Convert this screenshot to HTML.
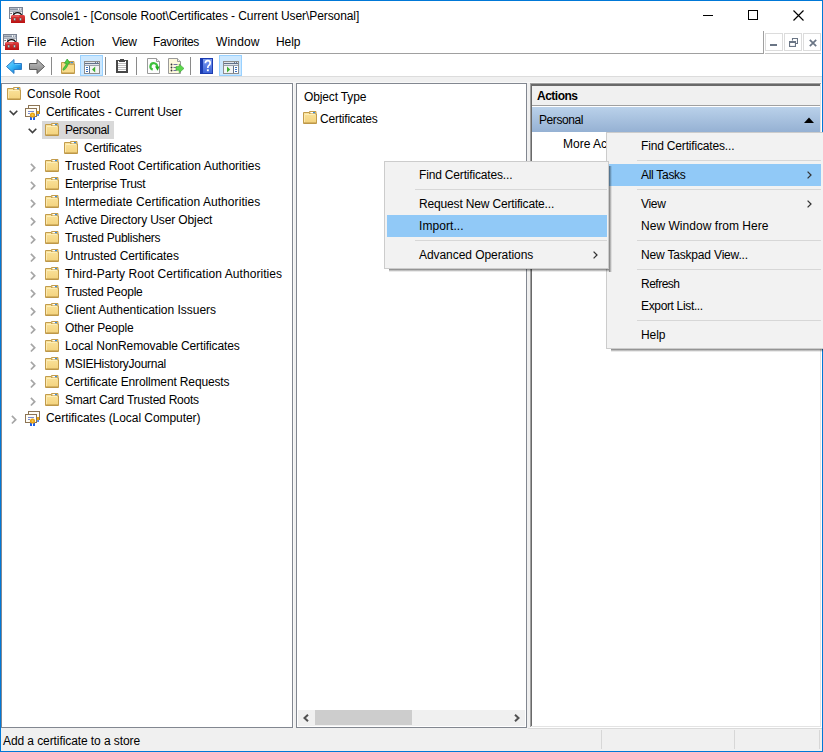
<!DOCTYPE html>
<html><head><meta charset="utf-8"><style>
html,body{margin:0;padding:0;}
body{width:823px;height:752px;position:relative;overflow:hidden;background:#fff;font-family:"Liberation Sans",sans-serif;font-size:12px;color:#000;}
.abs{position:absolute;}
.abs svg{display:block;}
.t{white-space:nowrap;line-height:18px;height:18px;}
</style></head><body>
<svg width="0" height="0" style="position:absolute"><defs><linearGradient id="fgrad" x1="0" y1="0" x2="0" y2="1"><stop offset="0" stop-color="#fae39c"/><stop offset="1" stop-color="#f3d27c"/></linearGradient></defs></svg>
<!-- window border -->
<div class="abs" style="left:0;top:0;width:821px;height:750px;border:1px solid #0078d7"></div>
<!-- title bar -->
<div class="abs" style="left:9px;top:7px;width:16px;height:16px">
<svg width="16" height="16" viewBox="0 0 16 16"><defs><linearGradient id="tbx" x1="0" y1="0" x2="0" y2="1"><stop offset="0" stop-color="#e04040"/><stop offset="1" stop-color="#b81010"/></linearGradient></defs><rect x="0.5" y="0.5" width="13" height="11" fill="#f4f6f8" stroke="#7b8494"/><rect x="1" y="1.5" width="8" height="1.3" fill="#6f7c90"/><rect x="10" y="1.5" width="1.2" height="1.2" fill="#6f7c90"/><rect x="11.8" y="1.5" width="1.2" height="1.2" fill="#6f7c90"/><rect x="1" y="3.5" width="12" height="1.2" fill="#8a93a3"/><rect x="4" y="5" width="1" height="6" fill="#7b8494"/><rect x="1.5" y="6" width="1.2" height="1" fill="#333"/><path d="M4.3 8.6 Q5 5.6 8.5 5.6 Q12 5.6 12.7 8.6" fill="none" stroke="#111" stroke-width="1.2"/><path d="M2 9.5 Q2 8 3.5 8 H14.5 Q16 8 16 9.5 V16 H2z" fill="url(#tbx)"/><rect x="3" y="8.6" width="7" height="1" fill="#f08080" opacity="0.7"/><rect x="4.8" y="11" width="1.8" height="2.6" rx="0.6" fill="#cfe4e4" stroke="#333" stroke-width="0.4"/><rect x="10.6" y="11" width="1.8" height="2.6" rx="0.6" fill="#cfe4e4" stroke="#333" stroke-width="0.4"/></svg></div>
<div class="abs t" style="left:30px;top:7px;letter-spacing:-0.08px">Console1 - [Console Root\Certificates - Current User\Personal]</div>
<div class="abs" style="left:703px;top:15px;width:10px;height:1px;background:#000"></div>
<div class="abs" style="left:748px;top:10px;width:8px;height:8px;border:1px solid #000"></div>
<div class="abs" style="left:793px;top:10px;width:11px;height:11px"><svg width="11" height="11" viewBox="0 0 11 11"><path d="M0.5 0.5 L10.5 10.5 M10.5 0.5 L0.5 10.5" stroke="#000" stroke-width="1.15"/></svg></div>
<!-- menu bar -->
<div class="abs" style="left:3px;top:34px;width:16px;height:16px">
<svg width="16" height="16" viewBox="0 0 16 16"><defs><linearGradient id="tbx2" x1="0" y1="0" x2="0" y2="1"><stop offset="0" stop-color="#e04040"/><stop offset="1" stop-color="#b81010"/></linearGradient></defs><rect x="0.5" y="0.5" width="13" height="11" fill="#f4f6f8" stroke="#7b8494"/><rect x="1" y="1.5" width="8" height="1.3" fill="#6f7c90"/><rect x="10" y="1.5" width="1.2" height="1.2" fill="#6f7c90"/><rect x="11.8" y="1.5" width="1.2" height="1.2" fill="#6f7c90"/><rect x="1" y="3.5" width="12" height="1.2" fill="#8a93a3"/><rect x="4" y="5" width="1" height="6" fill="#7b8494"/><rect x="1.5" y="6" width="1.2" height="1" fill="#333"/><path d="M4.3 8.6 Q5 5.6 8.5 5.6 Q12 5.6 12.7 8.6" fill="none" stroke="#111" stroke-width="1.2"/><path d="M2 9.5 Q2 8 3.5 8 H14.5 Q16 8 16 9.5 V16 H2z" fill="url(#tbx2)"/><rect x="3" y="8.6" width="7" height="1" fill="#f08080" opacity="0.7"/><rect x="4.8" y="11" width="1.8" height="2.6" rx="0.6" fill="#cfe4e4" stroke="#333" stroke-width="0.4"/><rect x="10.6" y="11" width="1.8" height="2.6" rx="0.6" fill="#cfe4e4" stroke="#333" stroke-width="0.4"/></svg></div>
<div class="abs t" style="left:27px;top:33px">File</div>
<div class="abs t" style="left:61px;top:33px">Action</div>
<div class="abs t" style="left:112px;top:33px;letter-spacing:-0.3px">View</div>
<div class="abs t" style="left:153px;top:33px;letter-spacing:-0.388px">Favorites</div>
<div class="abs t" style="left:216px;top:33px;letter-spacing:0.16px">Window</div>
<div class="abs t" style="left:276px;top:33px;letter-spacing:-0.1px">Help</div>
<div class="abs" style="left:1px;top:53px;width:763px;height:1px;background:#a0a0a0"></div>
<div class="abs" style="left:763px;top:31px;width:1px;height:22px;background:#a0a0a0"></div>
<div class="abs" style="left:765px;top:53px;width:56px;height:1px;background:#c8c8c8"></div>
<div class="abs" style="left:765px;top:33px;width:16px;height:16px;border:1px solid #dcdcdc"></div>
<div class="abs" style="left:784px;top:33px;width:16px;height:16px;border:1px solid #dcdcdc"></div>
<div class="abs" style="left:803px;top:33px;width:16px;height:16px;border:1px solid #dcdcdc"></div>
<div class="abs" style="left:770px;top:44px;width:7px;height:2px;background:#6a7585"></div>
<div class="abs" style="left:789px;top:38px;width:9px;height:9px"><svg width="9" height="9" viewBox="0 0 9 9"><path d="M3.5 2.5 V0.5 H8.5 V5.5 H6.5" fill="none" stroke="#6a7585" stroke-width="1.1"/><rect x="0.55" y="3.55" width="5.9" height="4.9" fill="none" stroke="#6a7585" stroke-width="1.1"/><rect x="0" y="3" width="7" height="2" fill="#6a7585"/></svg></div>
<div class="abs" style="left:809px;top:39px;width:8px;height:8px"><svg width="8" height="8" viewBox="0 0 8 8"><path d="M0.8 0.8 L7.2 7.2 M7.2 0.8 L0.8 7.2" stroke="#6a7585" stroke-width="1.7"/></svg></div>
<!-- toolbar -->
<div class="abs" style="left:1px;top:76px;width:821px;height:7px;background:#f0f0f0"></div>
<div class="abs" style="left:1px;top:76px;width:821px;height:1px;background:#dcdcdc"></div>
<div class="abs" style="left:1px;top:82px;width:821px;height:1px;background:#f8f8f8"></div>

<div class="abs" style="left:6px;top:59px;width:16px;height:15px"><svg width="16" height="15" viewBox="0 0 16 15"><defs><linearGradient id="gb" x1="0" y1="0" x2="1" y2="1"><stop offset="0" stop-color="#8ad8ff"/><stop offset="0.45" stop-color="#3ab8f8"/><stop offset="1" stop-color="#0068c8"/></linearGradient></defs><path d="M0.5 7.5 L8 0.5 V4.5 H15.5 V10.5 H8 V14.5 Z" fill="url(#gb)" stroke="#2f7dc6"/><path d="M9 5.5H14.5" stroke="#6cc8ff" stroke-width="0.8"/></svg></div>
<div class="abs" style="left:29px;top:59px;width:16px;height:15px"><svg width="16" height="15" viewBox="0 0 16 15"><defs><linearGradient id="gg" x1="0" y1="0" x2="0" y2="1"><stop offset="0" stop-color="#c4c4c4"/><stop offset="1" stop-color="#808080"/></linearGradient></defs><path d="M15.5 7.5 L8 0.5 V4.5 H0.5 V10.5 H8 V14.5 Z" fill="url(#gg)" stroke="#5a5a5a"/></svg></div>
<div class="abs" style="left:51px;top:57px;width:1px;height:18px;background:#8a8a8a"></div>
<div class="abs" style="left:60px;top:58px;width:16px;height:17px"><svg width="16" height="17" viewBox="0 0 16 17"><path d="M1.5 4.5h5.5l1 1.5h6.5v9.5h-13z" fill="#f8db8c" stroke="#c29c4c"/><path d="M7.5 3.5h6.5v2.5h-6z" fill="#f3d17a" stroke="#c29c4c"/><rect x="10.5" y="4" width="2.5" height="1.2" fill="#3b8de0"/><path d="M2 15h12" stroke="#b89244"/><path d="M2.8 11.5 C4 9 5.5 8 6.5 5.5 L4.5 5.2 L7.2 1 L10 5 L8.3 5.3 C7.6 8.5 6 10.5 4 12.3 Z" fill="#50d040" stroke="#2f9a2a" stroke-width="0.7"/></svg></div>
<div class="abs" style="left:80px;top:55px;width:21px;height:19px;border:1px solid #99d1ff;background:#cce8ff"></div>
<div class="abs" style="left:84px;top:61px;width:16px;height:13px"><svg width="16" height="13" viewBox="0 0 16 13" shape-rendering="crispEdges"><rect x="0" y="0" width="16" height="13" fill="#8c8c8c"/><rect x="1" y="1" width="14" height="11" fill="#fff"/><rect x="1" y="1" width="14" height="1" fill="#dfe3e8"/><rect x="11" y="1" width="1" height="1" fill="#6a7a90"/><rect x="13" y="1" width="1" height="1" fill="#6a7a90"/><rect x="1" y="2" width="14" height="1" fill="#61718a"/><rect x="1" y="3" width="14" height="1" fill="#dfe3e8"/><rect x="1" y="4" width="14" height="1" fill="#9aa2ae"/><rect x="5" y="5" width="1" height="7" fill="#61718a"/><rect x="6" y="5" width="9" height="7" fill="#f4f4f4"/><rect x="2" y="6" width="2" height="1" fill="#3a70c0"/><rect x="2" y="8" width="2" height="1" fill="#3a70c0"/><rect x="2" y="10" width="2" height="1" fill="#3a70c0"/><path d="M8 8.5 L11.2 5.5 V11.5 Z" fill="#3cb030" shape-rendering="auto"/></svg></div>
<div class="abs" style="left:105px;top:57px;width:1px;height:18px;background:#8a8a8a"></div>
<div class="abs" style="left:116px;top:59px;width:12px;height:14px"><svg width="12" height="14" viewBox="0 0 12 14" shape-rendering="crispEdges"><rect x="0" y="1" width="12" height="13" fill="#474747"/><rect x="2" y="2" width="8" height="10" fill="#fff"/><rect x="4" y="0" width="4" height="1" fill="#474747"/><rect x="3" y="2" width="6" height="1" fill="#474747"/><rect x="2" y="4" width="8" height="1" fill="#bdbdbd"/><rect x="2" y="6" width="8" height="1" fill="#bdbdbd"/><rect x="2" y="8" width="8" height="1" fill="#bdbdbd"/><rect x="2" y="10" width="8" height="1" fill="#bdbdbd"/></svg></div>
<div class="abs" style="left:136px;top:57px;width:1px;height:18px;background:#8a8a8a"></div>
<div class="abs" style="left:147px;top:58px;width:14px;height:16px"><svg width="14" height="16" viewBox="0 0 14 16"><path d="M0.5 0.5h9l3 3v12h-12z" fill="#fdfdfd" stroke="#9a9a9a"/><path d="M9.5 0.5v3h3" fill="#eee" stroke="#9a9a9a"/><path d="M5.7 11.6 A3.3 3.3 0 1 1 10 9" fill="none" stroke="#3cc03c" stroke-width="2.2"/><path d="M8 8.6 L12.6 8.4 L10.6 12.8 Z" fill="#1fae1f"/></svg></div>
<div class="abs" style="left:168px;top:58px;width:17px;height:16px"><svg width="17" height="16" viewBox="0 0 17 16"><path d="M0.5 0.5h9l3 3v12h-12z" fill="#fdf8dc" stroke="#9a9a9a"/><path d="M9.5 0.5v3h3" fill="#eee" stroke="#9a9a9a"/><circle cx="3.5" cy="6.5" r="0.9" fill="#333"/><circle cx="3.5" cy="9.5" r="0.9" fill="#333"/><circle cx="3.5" cy="12.5" r="0.9" fill="#333"/><path d="M5.5 6.5h4M5.5 9.5h3M5.5 12.5h3" stroke="#7474a0" stroke-width="1"/><path d="M8 8.6h3.2V6L16 10.4L11.2 14.8V12.2H8z" fill="#5cd84c" stroke="#3aa034" stroke-width="0.6"/></svg></div>
<div class="abs" style="left:190px;top:57px;width:1px;height:18px;background:#8a8a8a"></div>
<div class="abs" style="left:200px;top:58px;width:13px;height:16px"><svg width="13" height="16" viewBox="0 0 13 16"><defs><linearGradient id="hb" x1="0" y1="0" x2="0" y2="1"><stop offset="0" stop-color="#7a9af0"/><stop offset="1" stop-color="#3a62d8"/></linearGradient></defs><rect x="0" y="0" width="13" height="16" fill="#1c3cb0"/><rect x="3" y="1" width="9" height="14" fill="url(#hb)"/><path d="M5.3 5.2 Q5.5 2.6 7.8 2.6 Q10.2 2.6 10.2 4.9 Q10.2 6.6 8.6 7.6 Q7.8 8.2 7.8 10" fill="none" stroke="#fff" stroke-width="1.7"/><rect x="6.9" y="11.3" width="1.9" height="1.9" fill="#fff"/></svg></div>
<div class="abs" style="left:219px;top:55px;width:21px;height:19px;border:1px solid #99d1ff;background:#cce8ff"></div>
<div class="abs" style="left:223px;top:61px;width:16px;height:13px"><svg width="16" height="13" viewBox="0 0 16 13" shape-rendering="crispEdges"><rect x="0" y="0" width="16" height="13" fill="#8c8c8c"/><rect x="1" y="1" width="14" height="11" fill="#fff"/><rect x="1" y="1" width="14" height="1" fill="#dfe3e8"/><rect x="11" y="1" width="1" height="1" fill="#6a7a90"/><rect x="13" y="1" width="1" height="1" fill="#6a7a90"/><rect x="1" y="2" width="14" height="1" fill="#61718a"/><rect x="1" y="3" width="14" height="1" fill="#dfe3e8"/><rect x="1" y="4" width="14" height="1" fill="#9aa2ae"/><rect x="10" y="5" width="1" height="7" fill="#61718a"/><rect x="1" y="5" width="9" height="7" fill="#f4f4f4"/><rect x="12" y="6" width="2" height="1" fill="#3a70c0"/><rect x="12" y="8" width="2" height="1" fill="#3a70c0"/><rect x="12" y="10" width="2" height="1" fill="#3a70c0"/><path d="M4 5.5 L7.2 8.5 L4 11.5 Z" fill="#3cb030" shape-rendering="auto"/></svg></div>

<!-- panes -->
<div class="abs" style="left:1px;top:83px;width:290px;height:643px;border:1px solid #828790;background:#fff"></div>
<div class="abs" style="left:293px;top:83px;width:3px;height:645px;background:#f0f0f0"></div>
<div class="abs" style="left:293px;top:83px;width:1px;height:645px;background:#f8f8f8"></div>
<div class="abs" style="left:296px;top:83px;width:229px;height:643px;border:1px solid #828790;background:#fff"></div>
<div class="abs" style="left:527px;top:83px;width:3px;height:645px;background:#f0f0f0"></div>
<div class="abs" style="left:530px;top:83px;width:292px;height:645px;background:#fff"></div>
<div class="abs" style="left:530px;top:83px;width:291px;height:1px;background:#a0a0a0"></div>
<div class="abs" style="left:530px;top:83px;width:1px;height:644px;background:#a0a0a0"></div>
<div class="abs" style="left:531px;top:84px;width:290px;height:2px;background:#696969"></div>
<div class="abs" style="left:531px;top:84px;width:1px;height:643px;background:#696969"></div>
<div class="abs" style="left:531px;top:726px;width:290px;height:1px;background:#e3e3e3"></div>
<div class="abs" style="left:820px;top:84px;width:1px;height:643px;background:#e3e3e3"></div>
<div class="abs" style="left:6px;top:86px;width:16px;height:16px"><svg width="16" height="16" viewBox="0 0 16 16"><path d="M1.5 2.5h5.5l1 1.5h6.5v9.5h-13z" fill="url(#fgrad)" stroke="#c29c4c"/><path d="M7.5 1.5h6.5v2.5h-6z" fill="#f3d17a" stroke="#c29c4c"/><rect x="8.5" y="2" width="3" height="1.2" fill="#fff"/><rect x="11" y="2" width="2" height="1.2" fill="#3b8de0"/><path d="M2.5 4.5h11" stroke="#fdeeb9"/><path d="M2.5 5v7.5" stroke="#fcecb8" stroke-width="0.8"/><path d="M2 13h12" stroke="#b89244"/></svg></div>
<div class="abs t" style="left:27px;top:85px">Console Root</div>
<div class="abs" style="left:9px;top:110px;width:10px;height:6px"><svg width="10" height="6" viewBox="0 0 10 6"><path d="M0.7 0.7 L4.5 4.5 L8.3 0.7" fill="none" stroke="#404040" stroke-width="1.6"/></svg></div>
<div class="abs" style="left:25px;top:104px;width:16px;height:16px"><svg width="16" height="16" viewBox="0 0 16 16"><rect x="3.5" y="1.5" width="11" height="8" fill="#fffdf6" stroke="#8c7454"/><rect x="0.5" y="4.5" width="11" height="8" fill="#fffdf6" stroke="#8c7454"/><rect x="3" y="7" width="6" height="1" fill="#7a8ad0"/><rect x="3" y="9" width="2" height="1" fill="#7a8ad0"/><rect x="12" y="7" width="2" height="3" fill="#e9a313"/><rect x="12.3" y="10" width="1.5" height="2" fill="#2c6be0"/><rect x="5" y="12.5" width="2" height="3.5" fill="#1f5fe8"/><rect x="8" y="12.5" width="2" height="3.5" fill="#1f5fe8"/><circle cx="7.5" cy="11" r="2.6" fill="#e9a313"/><circle cx="7.5" cy="11" r="1.1" fill="#f7c850"/></svg></div>
<div class="abs t" style="left:46px;top:103px;letter-spacing:-0.123px">Certificates - Current User</div>
<div class="abs" style="left:42px;top:121px;width:72px;height:18px;background:#d9d9d9"></div>
<div class="abs" style="left:28px;top:128px;width:10px;height:6px"><svg width="10" height="6" viewBox="0 0 10 6"><path d="M0.7 0.7 L4.5 4.5 L8.3 0.7" fill="none" stroke="#404040" stroke-width="1.6"/></svg></div>
<div class="abs" style="left:44px;top:122px;width:16px;height:16px"><svg width="16" height="16" viewBox="0 0 16 16"><path d="M1.5 2.5h5.5l1 1.5h6.5v9.5h-13z" fill="url(#fgrad)" stroke="#c29c4c"/><path d="M7.5 1.5h6.5v2.5h-6z" fill="#f3d17a" stroke="#c29c4c"/><rect x="8.5" y="2" width="3" height="1.2" fill="#fff"/><rect x="11" y="2" width="2" height="1.2" fill="#3b8de0"/><path d="M2.5 4.5h11" stroke="#fdeeb9"/><path d="M2.5 5v7.5" stroke="#fcecb8" stroke-width="0.8"/><path d="M2 13h12" stroke="#b89244"/></svg></div>
<div class="abs t" style="left:65px;top:121px;letter-spacing:-0.414px">Personal</div>
<div class="abs" style="left:63px;top:140px;width:16px;height:16px"><svg width="16" height="16" viewBox="0 0 16 16"><path d="M1.5 2.5h5.5l1 1.5h6.5v9.5h-13z" fill="url(#fgrad)" stroke="#c29c4c"/><path d="M7.5 1.5h6.5v2.5h-6z" fill="#f3d17a" stroke="#c29c4c"/><rect x="8.5" y="2" width="3" height="1.2" fill="#fff"/><rect x="11" y="2" width="2" height="1.2" fill="#3b8de0"/><path d="M2.5 4.5h11" stroke="#fdeeb9"/><path d="M2.5 5v7.5" stroke="#fcecb8" stroke-width="0.8"/><path d="M2 13h12" stroke="#b89244"/></svg></div>
<div class="abs t" style="left:84px;top:139px;letter-spacing:-0.209px">Certificates</div>
<div class="abs" style="left:30px;top:163px;width:7px;height:10px"><svg width="7" height="10" viewBox="0 0 7 10"><path d="M0.9 0.9 L4.7 4.7 L0.9 8.5" fill="none" stroke="#a6a6a6" stroke-width="1.7"/></svg></div>
<div class="abs" style="left:44px;top:158px;width:16px;height:16px"><svg width="16" height="16" viewBox="0 0 16 16"><path d="M1.5 2.5h5.5l1 1.5h6.5v9.5h-13z" fill="url(#fgrad)" stroke="#c29c4c"/><path d="M7.5 1.5h6.5v2.5h-6z" fill="#f3d17a" stroke="#c29c4c"/><rect x="8.5" y="2" width="3" height="1.2" fill="#fff"/><rect x="11" y="2" width="2" height="1.2" fill="#3b8de0"/><path d="M2.5 4.5h11" stroke="#fdeeb9"/><path d="M2.5 5v7.5" stroke="#fcecb8" stroke-width="0.8"/><path d="M2 13h12" stroke="#b89244"/></svg></div>
<div class="abs t" style="left:65px;top:157px;letter-spacing:0.014px">Trusted Root Certification Authorities</div>
<div class="abs" style="left:30px;top:181px;width:7px;height:10px"><svg width="7" height="10" viewBox="0 0 7 10"><path d="M0.9 0.9 L4.7 4.7 L0.9 8.5" fill="none" stroke="#a6a6a6" stroke-width="1.7"/></svg></div>
<div class="abs" style="left:44px;top:176px;width:16px;height:16px"><svg width="16" height="16" viewBox="0 0 16 16"><path d="M1.5 2.5h5.5l1 1.5h6.5v9.5h-13z" fill="url(#fgrad)" stroke="#c29c4c"/><path d="M7.5 1.5h6.5v2.5h-6z" fill="#f3d17a" stroke="#c29c4c"/><rect x="8.5" y="2" width="3" height="1.2" fill="#fff"/><rect x="11" y="2" width="2" height="1.2" fill="#3b8de0"/><path d="M2.5 4.5h11" stroke="#fdeeb9"/><path d="M2.5 5v7.5" stroke="#fcecb8" stroke-width="0.8"/><path d="M2 13h12" stroke="#b89244"/></svg></div>
<div class="abs t" style="left:65px;top:175px;letter-spacing:-0.273px">Enterprise Trust</div>
<div class="abs" style="left:30px;top:199px;width:7px;height:10px"><svg width="7" height="10" viewBox="0 0 7 10"><path d="M0.9 0.9 L4.7 4.7 L0.9 8.5" fill="none" stroke="#a6a6a6" stroke-width="1.7"/></svg></div>
<div class="abs" style="left:44px;top:194px;width:16px;height:16px"><svg width="16" height="16" viewBox="0 0 16 16"><path d="M1.5 2.5h5.5l1 1.5h6.5v9.5h-13z" fill="url(#fgrad)" stroke="#c29c4c"/><path d="M7.5 1.5h6.5v2.5h-6z" fill="#f3d17a" stroke="#c29c4c"/><rect x="8.5" y="2" width="3" height="1.2" fill="#fff"/><rect x="11" y="2" width="2" height="1.2" fill="#3b8de0"/><path d="M2.5 4.5h11" stroke="#fdeeb9"/><path d="M2.5 5v7.5" stroke="#fcecb8" stroke-width="0.8"/><path d="M2 13h12" stroke="#b89244"/></svg></div>
<div class="abs t" style="left:65px;top:193px;letter-spacing:0.068px">Intermediate Certification Authorities</div>
<div class="abs" style="left:30px;top:217px;width:7px;height:10px"><svg width="7" height="10" viewBox="0 0 7 10"><path d="M0.9 0.9 L4.7 4.7 L0.9 8.5" fill="none" stroke="#a6a6a6" stroke-width="1.7"/></svg></div>
<div class="abs" style="left:44px;top:212px;width:16px;height:16px"><svg width="16" height="16" viewBox="0 0 16 16"><path d="M1.5 2.5h5.5l1 1.5h6.5v9.5h-13z" fill="url(#fgrad)" stroke="#c29c4c"/><path d="M7.5 1.5h6.5v2.5h-6z" fill="#f3d17a" stroke="#c29c4c"/><rect x="8.5" y="2" width="3" height="1.2" fill="#fff"/><rect x="11" y="2" width="2" height="1.2" fill="#3b8de0"/><path d="M2.5 4.5h11" stroke="#fdeeb9"/><path d="M2.5 5v7.5" stroke="#fcecb8" stroke-width="0.8"/><path d="M2 13h12" stroke="#b89244"/></svg></div>
<div class="abs t" style="left:65px;top:211px;letter-spacing:-0.122px">Active Directory User Object</div>
<div class="abs" style="left:30px;top:235px;width:7px;height:10px"><svg width="7" height="10" viewBox="0 0 7 10"><path d="M0.9 0.9 L4.7 4.7 L0.9 8.5" fill="none" stroke="#a6a6a6" stroke-width="1.7"/></svg></div>
<div class="abs" style="left:44px;top:230px;width:16px;height:16px"><svg width="16" height="16" viewBox="0 0 16 16"><path d="M1.5 2.5h5.5l1 1.5h6.5v9.5h-13z" fill="url(#fgrad)" stroke="#c29c4c"/><path d="M7.5 1.5h6.5v2.5h-6z" fill="#f3d17a" stroke="#c29c4c"/><rect x="8.5" y="2" width="3" height="1.2" fill="#fff"/><rect x="11" y="2" width="2" height="1.2" fill="#3b8de0"/><path d="M2.5 4.5h11" stroke="#fdeeb9"/><path d="M2.5 5v7.5" stroke="#fcecb8" stroke-width="0.8"/><path d="M2 13h12" stroke="#b89244"/></svg></div>
<div class="abs t" style="left:65px;top:229px;letter-spacing:-0.235px">Trusted Publishers</div>
<div class="abs" style="left:30px;top:253px;width:7px;height:10px"><svg width="7" height="10" viewBox="0 0 7 10"><path d="M0.9 0.9 L4.7 4.7 L0.9 8.5" fill="none" stroke="#a6a6a6" stroke-width="1.7"/></svg></div>
<div class="abs" style="left:44px;top:248px;width:16px;height:16px"><svg width="16" height="16" viewBox="0 0 16 16"><path d="M1.5 2.5h5.5l1 1.5h6.5v9.5h-13z" fill="url(#fgrad)" stroke="#c29c4c"/><path d="M7.5 1.5h6.5v2.5h-6z" fill="#f3d17a" stroke="#c29c4c"/><rect x="8.5" y="2" width="3" height="1.2" fill="#fff"/><rect x="11" y="2" width="2" height="1.2" fill="#3b8de0"/><path d="M2.5 4.5h11" stroke="#fdeeb9"/><path d="M2.5 5v7.5" stroke="#fcecb8" stroke-width="0.8"/><path d="M2 13h12" stroke="#b89244"/></svg></div>
<div class="abs t" style="left:65px;top:247px;letter-spacing:-0.071px">Untrusted Certificates</div>
<div class="abs" style="left:30px;top:271px;width:7px;height:10px"><svg width="7" height="10" viewBox="0 0 7 10"><path d="M0.9 0.9 L4.7 4.7 L0.9 8.5" fill="none" stroke="#a6a6a6" stroke-width="1.7"/></svg></div>
<div class="abs" style="left:44px;top:266px;width:16px;height:16px"><svg width="16" height="16" viewBox="0 0 16 16"><path d="M1.5 2.5h5.5l1 1.5h6.5v9.5h-13z" fill="url(#fgrad)" stroke="#c29c4c"/><path d="M7.5 1.5h6.5v2.5h-6z" fill="#f3d17a" stroke="#c29c4c"/><rect x="8.5" y="2" width="3" height="1.2" fill="#fff"/><rect x="11" y="2" width="2" height="1.2" fill="#3b8de0"/><path d="M2.5 4.5h11" stroke="#fdeeb9"/><path d="M2.5 5v7.5" stroke="#fcecb8" stroke-width="0.8"/><path d="M2 13h12" stroke="#b89244"/></svg></div>
<div class="abs t" style="left:65px;top:265px;letter-spacing:0.073px">Third-Party Root Certification Authorities</div>
<div class="abs" style="left:30px;top:289px;width:7px;height:10px"><svg width="7" height="10" viewBox="0 0 7 10"><path d="M0.9 0.9 L4.7 4.7 L0.9 8.5" fill="none" stroke="#a6a6a6" stroke-width="1.7"/></svg></div>
<div class="abs" style="left:44px;top:284px;width:16px;height:16px"><svg width="16" height="16" viewBox="0 0 16 16"><path d="M1.5 2.5h5.5l1 1.5h6.5v9.5h-13z" fill="url(#fgrad)" stroke="#c29c4c"/><path d="M7.5 1.5h6.5v2.5h-6z" fill="#f3d17a" stroke="#c29c4c"/><rect x="8.5" y="2" width="3" height="1.2" fill="#fff"/><rect x="11" y="2" width="2" height="1.2" fill="#3b8de0"/><path d="M2.5 4.5h11" stroke="#fdeeb9"/><path d="M2.5 5v7.5" stroke="#fcecb8" stroke-width="0.8"/><path d="M2 13h12" stroke="#b89244"/></svg></div>
<div class="abs t" style="left:65px;top:283px;letter-spacing:-0.246px">Trusted People</div>
<div class="abs" style="left:30px;top:307px;width:7px;height:10px"><svg width="7" height="10" viewBox="0 0 7 10"><path d="M0.9 0.9 L4.7 4.7 L0.9 8.5" fill="none" stroke="#a6a6a6" stroke-width="1.7"/></svg></div>
<div class="abs" style="left:44px;top:302px;width:16px;height:16px"><svg width="16" height="16" viewBox="0 0 16 16"><path d="M1.5 2.5h5.5l1 1.5h6.5v9.5h-13z" fill="url(#fgrad)" stroke="#c29c4c"/><path d="M7.5 1.5h6.5v2.5h-6z" fill="#f3d17a" stroke="#c29c4c"/><rect x="8.5" y="2" width="3" height="1.2" fill="#fff"/><rect x="11" y="2" width="2" height="1.2" fill="#3b8de0"/><path d="M2.5 4.5h11" stroke="#fdeeb9"/><path d="M2.5 5v7.5" stroke="#fcecb8" stroke-width="0.8"/><path d="M2 13h12" stroke="#b89244"/></svg></div>
<div class="abs t" style="left:65px;top:301px;letter-spacing:-0.014px">Client Authentication Issuers</div>
<div class="abs" style="left:30px;top:325px;width:7px;height:10px"><svg width="7" height="10" viewBox="0 0 7 10"><path d="M0.9 0.9 L4.7 4.7 L0.9 8.5" fill="none" stroke="#a6a6a6" stroke-width="1.7"/></svg></div>
<div class="abs" style="left:44px;top:320px;width:16px;height:16px"><svg width="16" height="16" viewBox="0 0 16 16"><path d="M1.5 2.5h5.5l1 1.5h6.5v9.5h-13z" fill="url(#fgrad)" stroke="#c29c4c"/><path d="M7.5 1.5h6.5v2.5h-6z" fill="#f3d17a" stroke="#c29c4c"/><rect x="8.5" y="2" width="3" height="1.2" fill="#fff"/><rect x="11" y="2" width="2" height="1.2" fill="#3b8de0"/><path d="M2.5 4.5h11" stroke="#fdeeb9"/><path d="M2.5 5v7.5" stroke="#fcecb8" stroke-width="0.8"/><path d="M2 13h12" stroke="#b89244"/></svg></div>
<div class="abs t" style="left:65px;top:319px;letter-spacing:-0.182px">Other People</div>
<div class="abs" style="left:30px;top:343px;width:7px;height:10px"><svg width="7" height="10" viewBox="0 0 7 10"><path d="M0.9 0.9 L4.7 4.7 L0.9 8.5" fill="none" stroke="#a6a6a6" stroke-width="1.7"/></svg></div>
<div class="abs" style="left:44px;top:338px;width:16px;height:16px"><svg width="16" height="16" viewBox="0 0 16 16"><path d="M1.5 2.5h5.5l1 1.5h6.5v9.5h-13z" fill="url(#fgrad)" stroke="#c29c4c"/><path d="M7.5 1.5h6.5v2.5h-6z" fill="#f3d17a" stroke="#c29c4c"/><rect x="8.5" y="2" width="3" height="1.2" fill="#fff"/><rect x="11" y="2" width="2" height="1.2" fill="#3b8de0"/><path d="M2.5 4.5h11" stroke="#fdeeb9"/><path d="M2.5 5v7.5" stroke="#fcecb8" stroke-width="0.8"/><path d="M2 13h12" stroke="#b89244"/></svg></div>
<div class="abs t" style="left:65px;top:337px;letter-spacing:-0.11px">Local NonRemovable Certificates</div>
<div class="abs" style="left:30px;top:361px;width:7px;height:10px"><svg width="7" height="10" viewBox="0 0 7 10"><path d="M0.9 0.9 L4.7 4.7 L0.9 8.5" fill="none" stroke="#a6a6a6" stroke-width="1.7"/></svg></div>
<div class="abs" style="left:44px;top:356px;width:16px;height:16px"><svg width="16" height="16" viewBox="0 0 16 16"><path d="M1.5 2.5h5.5l1 1.5h6.5v9.5h-13z" fill="url(#fgrad)" stroke="#c29c4c"/><path d="M7.5 1.5h6.5v2.5h-6z" fill="#f3d17a" stroke="#c29c4c"/><rect x="8.5" y="2" width="3" height="1.2" fill="#fff"/><rect x="11" y="2" width="2" height="1.2" fill="#3b8de0"/><path d="M2.5 4.5h11" stroke="#fdeeb9"/><path d="M2.5 5v7.5" stroke="#fcecb8" stroke-width="0.8"/><path d="M2 13h12" stroke="#b89244"/></svg></div>
<div class="abs t" style="left:65px;top:355px;letter-spacing:-0.282px">MSIEHistoryJournal</div>
<div class="abs" style="left:30px;top:379px;width:7px;height:10px"><svg width="7" height="10" viewBox="0 0 7 10"><path d="M0.9 0.9 L4.7 4.7 L0.9 8.5" fill="none" stroke="#a6a6a6" stroke-width="1.7"/></svg></div>
<div class="abs" style="left:44px;top:374px;width:16px;height:16px"><svg width="16" height="16" viewBox="0 0 16 16"><path d="M1.5 2.5h5.5l1 1.5h6.5v9.5h-13z" fill="url(#fgrad)" stroke="#c29c4c"/><path d="M7.5 1.5h6.5v2.5h-6z" fill="#f3d17a" stroke="#c29c4c"/><rect x="8.5" y="2" width="3" height="1.2" fill="#fff"/><rect x="11" y="2" width="2" height="1.2" fill="#3b8de0"/><path d="M2.5 4.5h11" stroke="#fdeeb9"/><path d="M2.5 5v7.5" stroke="#fcecb8" stroke-width="0.8"/><path d="M2 13h12" stroke="#b89244"/></svg></div>
<div class="abs t" style="left:65px;top:373px;letter-spacing:-0.14px">Certificate Enrollment Requests</div>
<div class="abs" style="left:30px;top:397px;width:7px;height:10px"><svg width="7" height="10" viewBox="0 0 7 10"><path d="M0.9 0.9 L4.7 4.7 L0.9 8.5" fill="none" stroke="#a6a6a6" stroke-width="1.7"/></svg></div>
<div class="abs" style="left:44px;top:392px;width:16px;height:16px"><svg width="16" height="16" viewBox="0 0 16 16"><path d="M1.5 2.5h5.5l1 1.5h6.5v9.5h-13z" fill="url(#fgrad)" stroke="#c29c4c"/><path d="M7.5 1.5h6.5v2.5h-6z" fill="#f3d17a" stroke="#c29c4c"/><rect x="8.5" y="2" width="3" height="1.2" fill="#fff"/><rect x="11" y="2" width="2" height="1.2" fill="#3b8de0"/><path d="M2.5 4.5h11" stroke="#fdeeb9"/><path d="M2.5 5v7.5" stroke="#fcecb8" stroke-width="0.8"/><path d="M2 13h12" stroke="#b89244"/></svg></div>
<div class="abs t" style="left:65px;top:391px;letter-spacing:-0.23px">Smart Card Trusted Roots</div>
<div class="abs" style="left:11px;top:415px;width:7px;height:10px"><svg width="7" height="10" viewBox="0 0 7 10"><path d="M0.9 0.9 L4.7 4.7 L0.9 8.5" fill="none" stroke="#a6a6a6" stroke-width="1.7"/></svg></div>
<div class="abs" style="left:25px;top:410px;width:16px;height:16px"><svg width="16" height="16" viewBox="0 0 16 16"><rect x="3.5" y="1.5" width="11" height="8" fill="#fffdf6" stroke="#8c7454"/><rect x="0.5" y="4.5" width="11" height="8" fill="#fffdf6" stroke="#8c7454"/><rect x="3" y="7" width="6" height="1" fill="#7a8ad0"/><rect x="3" y="9" width="2" height="1" fill="#7a8ad0"/><rect x="12" y="7" width="2" height="3" fill="#e9a313"/><rect x="12.3" y="10" width="1.5" height="2" fill="#2c6be0"/><rect x="5" y="12.5" width="2" height="3.5" fill="#1f5fe8"/><rect x="8" y="12.5" width="2" height="3.5" fill="#1f5fe8"/><circle cx="7.5" cy="11" r="2.6" fill="#e9a313"/><circle cx="7.5" cy="11" r="1.1" fill="#f7c850"/></svg></div>
<div class="abs t" style="left:46px;top:409px;letter-spacing:-0.054px">Certificates (Local Computer)</div>
<!-- middle pane -->
<div class="abs t" style="left:304px;top:88px;letter-spacing:-0.14px">Object Type</div>
<div class="abs" style="left:302px;top:110px;width:16px;height:16px"><svg width="16" height="16" viewBox="0 0 16 16"><path d="M1.5 2.5h5.5l1 1.5h6.5v9.5h-13z" fill="url(#fgrad)" stroke="#c29c4c"/><path d="M7.5 1.5h6.5v2.5h-6z" fill="#f3d17a" stroke="#c29c4c"/><rect x="8.5" y="2" width="3" height="1.2" fill="#fff"/><rect x="11" y="2" width="2" height="1.2" fill="#3b8de0"/><path d="M2.5 4.5h11" stroke="#fdeeb9"/><path d="M2.5 5v7.5" stroke="#fcecb8" stroke-width="0.8"/><path d="M2 13h12" stroke="#b89244"/></svg></div>
<div class="abs t" style="left:320px;top:110px;letter-spacing:-0.209px">Certificates</div>
<div class="abs" style="left:298px;top:710px;width:227px;height:16px;background:#f0f0f0"></div>
<div class="abs" style="left:315px;top:710px;width:97px;height:15px;background:#cdcdcd"></div>
<div class="abs" style="left:303px;top:714px;width:6px;height:8px"><svg width="6" height="8" viewBox="0 0 6 8"><path d="M5 0.8 L1.5 4 L5 7.2" fill="none" stroke="#505050" stroke-width="2"/></svg></div>
<div class="abs" style="left:514px;top:714px;width:6px;height:8px"><svg width="6" height="8" viewBox="0 0 6 8"><path d="M1 0.8 L4.5 4 L1 7.2" fill="none" stroke="#505050" stroke-width="2"/></svg></div>
<!-- actions pane -->
<div class="abs" style="left:532px;top:86px;width:288px;height:19px;background:#f0f0f0"></div>
<div class="abs" style="left:532px;top:105px;width:288px;height:1px;background:#a0a0a0"></div>
<div class="abs t" style="left:537px;top:87px;font-weight:bold;letter-spacing:-0.5px">Actions</div>
<div class="abs" style="left:532px;top:106px;width:288px;height:1px;background:#fff"></div>
<div class="abs" style="left:532px;top:107px;width:288px;height:25px;background:linear-gradient(#bad1ea,#95b1d3)"></div>
<div class="abs t" style="left:539px;top:111px;letter-spacing:-0.414px">Personal</div>
<div class="abs" style="left:804px;top:117px;width:10px;height:6px"><svg width="10" height="6" viewBox="0 0 10 6"><path d="M0 6 L5 0.5 L10 6z" fill="#000"/></svg></div>
<div class="abs t" style="left:563px;top:135px">More Actions</div>
<!-- status bar -->
<div class="abs" style="left:1px;top:728px;width:821px;height:23px;background:#f0f0f0"></div>
<div class="abs" style="left:528px;top:728px;width:294px;height:1px;background:#dadada"></div>
<div class="abs" style="left:601px;top:730px;width:1px;height:19px;background:#d7d7d7"></div>
<div class="abs" style="left:734px;top:730px;width:1px;height:19px;background:#d7d7d7"></div>
<div class="abs" style="left:819px;top:730px;width:1px;height:19px;background:#d7d7d7"></div>
<div class="abs t" style="left:3px;top:732px;letter-spacing:-0.085px">Add a certificate to a store</div>
<!-- main context menu -->
<div class="abs" style="left:611px;top:349px;width:212px;height:3px;background:linear-gradient(rgba(0,0,0,0.5),rgba(0,0,0,0.2) 60%,rgba(0,0,0,0))"></div>
<div class="abs" style="left:606px;top:132px;width:229px;height:215px;border:1px solid #cccccc;background:#f2f2f2"></div>
<div class="abs t" style="left:641px;top:137px;letter-spacing:-0.168px">Find Certificates...</div>
<div class="abs" style="left:637px;top:160px;width:184px;height:1px;background:#d7d7d7"></div>
<div class="abs" style="left:609px;top:164px;width:212px;height:22px;background:#91c9f7"></div>
<div class="abs t" style="left:641px;top:166px;letter-spacing:-0.287px">All Tasks</div>
<div class="abs" style="left:807px;top:171px;width:5px;height:8px"><svg width="5" height="8" viewBox="0 0 5 8"><path d="M0.6 0.6 L4 4 L0.6 7.4" fill="none" stroke="#333" stroke-width="1.25"/></svg></div>
<div class="abs" style="left:637px;top:189px;width:184px;height:1px;background:#d7d7d7"></div>
<div class="abs t" style="left:641px;top:195px;letter-spacing:-0.3px">View</div>
<div class="abs" style="left:807px;top:200px;width:5px;height:8px"><svg width="5" height="8" viewBox="0 0 5 8"><path d="M0.6 0.6 L4 4 L0.6 7.4" fill="none" stroke="#333" stroke-width="1.25"/></svg></div>
<div class="abs t" style="left:641px;top:217px;letter-spacing:0.037px">New Window from Here</div>
<div class="abs" style="left:637px;top:240px;width:184px;height:1px;background:#d7d7d7"></div>
<div class="abs t" style="left:641px;top:246px;letter-spacing:-0.178px">New Taskpad View...</div>
<div class="abs" style="left:637px;top:269px;width:184px;height:1px;background:#d7d7d7"></div>
<div class="abs t" style="left:641px;top:275px;letter-spacing:-0.5px">Refresh</div>
<div class="abs t" style="left:641px;top:297px;letter-spacing:-0.346px">Export List...</div>
<div class="abs" style="left:637px;top:320px;width:184px;height:1px;background:#d7d7d7"></div>
<div class="abs t" style="left:641px;top:326px;letter-spacing:-0.1px">Help</div>
<!-- submenu -->
<div class="abs" style="left:389px;top:269px;width:220px;height:3px;background:linear-gradient(rgba(0,0,0,0.5),rgba(0,0,0,0.2) 60%,rgba(0,0,0,0))"></div>
<div class="abs" style="left:609px;top:166px;width:3px;height:106px;background:linear-gradient(to right,rgba(0,0,0,0.5),rgba(0,0,0,0.2) 60%,rgba(0,0,0,0))"></div>
<div class="abs" style="left:384px;top:161px;width:223px;height:106px;border:1px solid #cccccc;background:#f2f2f2"></div>
<div class="abs t" style="left:419px;top:166px;letter-spacing:-0.168px">Find Certificates...</div>
<div class="abs" style="left:415px;top:189px;width:192px;height:1px;background:#d7d7d7"></div>
<div class="abs t" style="left:419px;top:195px;letter-spacing:-0.164px">Request New Certificate...</div>
<div class="abs" style="left:387px;top:215px;width:220px;height:22px;background:#91c9f7"></div>
<div class="abs t" style="left:419px;top:217px;letter-spacing:0.075px">Import...</div>
<div class="abs" style="left:415px;top:240px;width:192px;height:1px;background:#d7d7d7"></div>
<div class="abs t" style="left:419px;top:246px;letter-spacing:-0.061px">Advanced Operations</div>
<div class="abs" style="left:593px;top:251px;width:5px;height:8px"><svg width="5" height="8" viewBox="0 0 5 8"><path d="M0.6 0.6 L4 4 L0.6 7.4" fill="none" stroke="#333" stroke-width="1.25"/></svg></div>

</body></html>
